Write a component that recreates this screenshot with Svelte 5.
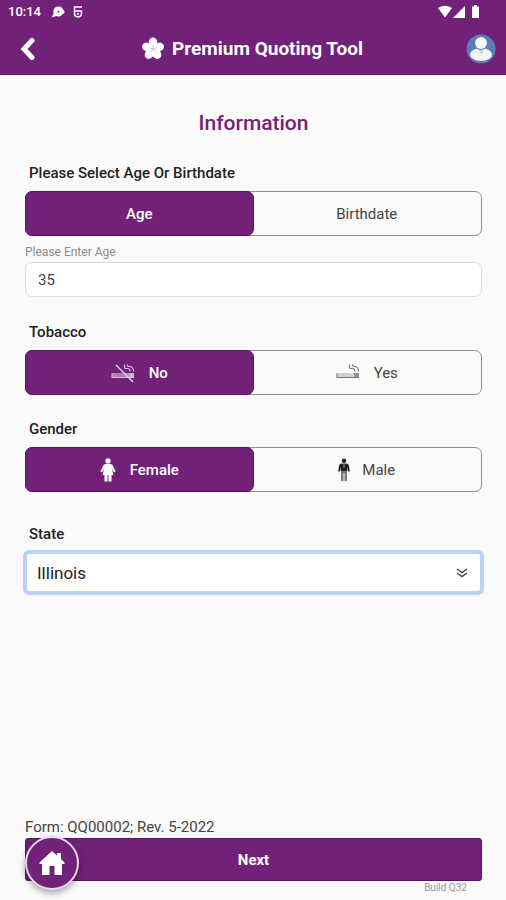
<script lang="ts">
  type Mode = "age" | "birthdate";

  const states = ["Illinois", "Indiana", "Iowa", "Michigan", "Wisconsin"];

  let mode = $state<Mode>("age");
  let age = $state("35");
  let tobacco = $state("no");
  let gender = $state("female");
  let region = $state("Illinois");
</script>

{#snippet cigarette(crossed: boolean)}
  <svg class="cig" class:crossed viewBox="0 0 24 22" aria-hidden="true">
    <rect x="1" y="11" width="22" height="5" rx="1" fill="currentColor" opacity="0.3" />
    <path
      d="M1 11V16M1 15.500H23"
      fill="none"
      stroke="currentColor"
      stroke-width="1"
    />
    <rect x="18" y="11" width="5" height="5" fill="currentColor" opacity="0.7" />
    <path
      d="M13.5 2.5V5.5Q13.5 6.5 15 6.5H16.5Q19 6.5 19 9.5M16.5 2.5V3.5Q16.5 4.5 18.5 4.5Q22.5 4.5 22.5 9.5"
      fill="none"
      stroke="currentColor"
      stroke-width="1.2"
    />
    {#if crossed}
      <rect x="1" y="11" width="22" height="5" rx="1" fill="currentColor" opacity="0.4" />
      <path d="M5 3L22 20" stroke="currentColor" stroke-width="1.6" />
    {/if}
  </svg>
{/snippet}

<div class="screen">
  <header>
    <div class="status">
      <span class="time">10:14</span>
      <svg class="glyph" viewBox="0 0 14 12" aria-hidden="true">
        <path
          d="M7.500 0.500A4.800 4.800 0 0 1 12 3.500Q14 4.500 13.500 6.500Q13 8 11.500 8A4.800 4.800 0 0 1 5.500 10L0.500 11.500L2.800 7.500A4.900 4.900 0 0 1 7.500 0.500Z"
          fill="currentColor"
        />
        <circle cx="7.500" cy="5.500" r="1" fill="#712177" />
      </svg>
      <svg class="glyph five" viewBox="0 0 10 12" aria-hidden="true">
        <path
          d="M9 1H1.500V5H8.500V8Q8.500 10.500 5 11Q1.500 10.500 1.500 8V5M4 8H6"
          fill="none"
          stroke="currentColor"
          stroke-width="1.4"
        />
      </svg>
      <svg class="signals" viewBox="0 0 44 14" aria-hidden="true">
        <path d="M0 3Q7 -1.500 14 3L7 12.500Z" fill="currentColor" />
        <path d="M15 13L27 1V13Z" fill="currentColor" />
        <path
          d="M36 0H39V1.500H41V13H34V1.500H36Z"
          fill="currentColor"
        />
      </svg>
    </div>
    <div class="bar">
      <button class="icon-btn" type="button" aria-label="Back">
        <svg class="back" viewBox="0 0 16 24" aria-hidden="true">
          <path
            d="M12 3.500L4 12L12 20.500"
            fill="none"
            stroke="currentColor"
            stroke-width="5"
            stroke-linecap="round"
          />
        </svg>
      </button>
      <h1>
        <svg class="flower" viewBox="-12 -12 24 24" aria-hidden="true">
          {#each [0, 72, 144, 216, 288] as angle}
            <g transform="rotate({angle})">
              <ellipse cx="0" cy="-6.500" rx="4.300" ry="4.900" fill="currentColor" />
            </g>
          {/each}
          <circle r="3.500" fill="currentColor" />
          <path
            d="M0 0V-4M0 0L3.800 -1.200M0 0L2.400 3.200M0 0L-2.400 3.200M0 0L-3.800 -1.200"
            stroke="#c9a9cc"
            stroke-width="0.7"
          />
        </svg>
        Premium Quoting Tool
      </h1>
      <button class="icon-btn" type="button" aria-label="Profile">
        <svg class="avatar" viewBox="0 0 30 30" aria-hidden="true">
          <circle cx="15" cy="15" r="14.500" fill="#5d7db6" />
          <ellipse cx="15" cy="20.500" rx="11" ry="6.500" fill="#f3f5f8" />
          <circle cx="15" cy="9" r="7" fill="#5d7db6" />
          <circle cx="15" cy="9" r="6" fill="#f3f5f8" />
          <path d="M12.500 16H17.500L15 21Z" fill="#d3d8dc" />
        </svg>
      </button>
    </div>
  </header>

  <main>
    <h2>Information</h2>

    <fieldset class="first">
      <legend>Please Select Age Or Birthdate</legend>
      <div class="segments">
        <label>
          <input type="radio" name="mode" value="age" bind:group={mode} />
          Age
        </label>
        <label>
          <input type="radio" name="mode" value="birthdate" bind:group={mode} />
          Birthdate
        </label>
      </div>
    </fieldset>

    <div class="field">
      <label class="hint" for="age">Please Enter Age</label>
      <input class="text" id="age" type="text" inputmode="numeric" bind:value={age} />
    </div>

    <fieldset class="group">
      <legend>Tobacco</legend>
      <div class="segments">
        <label>
          <input type="radio" name="tobacco" value="no" bind:group={tobacco} />
          {@render cigarette(true)}
          No
        </label>
        <label>
          <input type="radio" name="tobacco" value="yes" bind:group={tobacco} />
          {@render cigarette(false)}
          Yes
        </label>
      </div>
    </fieldset>

    <fieldset class="group">
      <legend>Gender</legend>
      <div class="segments">
        <label>
          <input type="radio" name="gender" value="female" bind:group={gender} />
          <svg class="person" viewBox="0 0 16 24" aria-hidden="true">
            <circle cx="8" cy="3" r="2.700" fill="currentColor" />
            <path
              d="M5.500 6H10.500Q12.500 6 13.500 9L15.500 13Q15 14.500 13.800 14L12 11.500L13.500 17H11.500V23.500H8.500V17H7.500V23.500H4.500V17H2.500L4 11.500L2.200 14Q1 14.500 0.500 13L2.500 9Q3.500 6 5.500 6Z"
              fill="currentColor"
            />
          </svg>
          Female
        </label>
        <label class="male">
          <input type="radio" name="gender" value="male" bind:group={gender} />
          <svg class="person slim" viewBox="0 0 12 24" aria-hidden="true">
            <circle cx="6" cy="2.700" r="2.200" fill="#222" />
            <path
              d="M3.500 5.500H8.500Q10.500 5.500 11 8L11.800 13.500H10L9 9V14H3V9L2 13.500H0.200L1 8Q1.500 5.500 3.500 5.500Z"
              fill="#222"
            />
            <path d="M3 13H9V23H6.500V15H5.500V23H3Z" fill="#777" />
            <path d="M5.500 15H6.500V23H5.500Z" fill="#bbb" />
            <path d="M6 6V10" stroke="#999" stroke-width="1" />
          </svg>
          Male
        </label>
      </div>
    </fieldset>

    <div class="state">
      <label class="caption" for="state">State</label>
      <div class="select">
        <select id="state" bind:value={region}>
          {#each states as name}
            <option>{name}</option>
          {/each}
        </select>
        <svg class="chevrons" viewBox="0 0 12 10" aria-hidden="true">
          <path
            d="M1 1L6 4.500L11 1M1 5L6 8.500L11 5"
            fill="none"
            stroke="currentColor"
            stroke-width="1.5"
          />
        </svg>
      </div>
    </div>
  </main>

  <footer>
    <p class="form-id">Form: QQ00002; Rev. 5-2022</p>
    <div class="next-row">
      <button class="next" type="button">Next</button>
      <button class="home" type="button" aria-label="Home">
        <svg viewBox="0 0 26 26" aria-hidden="true">
          <path
            d="M13 1L18 5.500V3H22V9L25.500 12.500V14H23V25H15.500V16H10.500V25H3V14H0.500V12.500Z"
            fill="currentColor"
          />
        </svg>
      </button>
    </div>
    <p class="build">Build Q32</p>
  </footer>
</div>

<style>
  :global(body) {
    background: #fafafa;
  }
  .screen {
    --purple: #712177;
    --purple-edge: #5c0f68;
    display: flex;
    flex-direction: column;
    min-height: 100vh;
    background: #fafafa;
    color: #222;
    font-family: Roboto, "Liberation Sans", sans-serif;
    font-size: 15px;
    line-height: 16px;
  }
  .screen *,
  .screen {
    box-sizing: border-box;
  }
  h1,
  h2,
  p,
  fieldset,
  legend {
    margin: 0;
    padding: 0;
    border: 0;
  }
  button,
  input,
  select {
    font: inherit;
    color: inherit;
  }
  svg {
    display: block;
    flex: none;
  }

  header {
    background: var(--purple);
    border-bottom: 1px solid var(--purple-edge);
    color: #fff;
  }
  .status {
    display: flex;
    align-items: center;
    height: 24px;
    padding: 0 24px 0 8px;
  }
  .time {
    margin-right: 10px;
    font-size: 13px;
    font-weight: 500;
  }
  .glyph {
    width: 14px;
    height: 12px;
  }
  .five {
    width: 10px;
    margin-left: 8px;
  }
  .signals {
    width: 44px;
    height: 14px;
    margin-left: auto;
  }
  .bar {
    display: flex;
    align-items: center;
    justify-content: space-between;
    height: 50px;
    padding: 0 10px 0 20px;
  }
  .icon-btn {
    display: flex;
    padding: 0;
    border: 0;
    background: none;
    cursor: pointer;
  }
  .back {
    width: 16px;
    height: 24px;
  }
  .avatar {
    width: 30px;
    height: 30px;
  }
  h1 {
    display: flex;
    align-items: center;
    gap: 7px;
    padding-left: 2px;
    font-size: 19px;
    font-weight: 700;
    line-height: 24px;
  }
  .flower {
    width: 24px;
    height: 24px;
  }

  main {
    flex: 1;
    padding: 34px 24px 24px 25px;
  }
  h2 {
    color: var(--purple);
    font-size: 21px;
    font-weight: 500;
    line-height: 28px;
    text-align: center;
  }
  fieldset {
    min-width: 0;
  }
  legend,
  .caption {
    display: block;
    padding: 0 4px 10px;
    font-weight: 500;
  }
  .first {
    margin-top: 28px;
  }
  .group {
    margin-top: 27px;
  }
  .group + .group {
    margin-top: 26px;
  }
  .state {
    margin-top: 34px;
  }
  .state .caption {
    padding-bottom: 8px;
  }
  .segments {
    display: grid;
    grid-template-columns: 1fr 1fr;
    height: 45px;
    border: 1px solid #918ca0;
    border-radius: 7px;
  }
  .segments label {
    display: flex;
    align-items: center;
    justify-content: center;
    gap: 14px;
    margin: -1px 0 -1px -1px;
    border-radius: 7px;
    color: #444;
    cursor: pointer;
  }
  .segments .male {
    gap: 12px;
  }
  .segments label:has(input:checked) {
    border: 1px solid var(--purple-edge);
    background: var(--purple);
    color: #fff;
    font-weight: 500;
  }
  .segments label:has(input:focus-visible) {
    outline: 2px solid #b3d1fa;
  }
  /* Off screen but still focusable; the label is what shows. */
  .segments input {
    position: absolute;
    width: 1px;
    height: 1px;
    margin: 0;
    opacity: 0;
  }
  .cig {
    width: 24px;
    height: 22px;
    color: #777;
  }
  .crossed {
    color: #dcc6de;
  }
  .person {
    width: 16px;
    height: 24px;
  }
  .slim {
    width: 12px;
  }

  .field {
    margin-top: 9px;
  }
  .hint {
    display: block;
    padding-bottom: 2px;
    color: #8c8c8c;
    font-size: 12px;
    line-height: 15px;
  }
  .text {
    display: block;
    width: 100%;
    height: 35px;
    padding: 0 12px;
    border: 1px solid #dcdcdc;
    border-radius: 7px;
    background: #fff;
    color: #444;
  }

  .select {
    display: grid;
    align-items: center;
    margin: 0 -2px;
    border: 4px solid #b8d2f9;
    border-radius: 6px;
    background: #fff;
  }
  select {
    grid-area: 1 / 1;
    width: 100%;
    height: 37px;
    padding: 0 10px;
    border: 0;
    outline: 0;
    background: none;
    appearance: none;
    font-size: 17px;
  }
  .chevrons {
    grid-area: 1 / 1;
    justify-self: end;
    width: 12px;
    height: 10px;
    margin-right: 12px;
    color: #444;
    pointer-events: none;
  }

  footer {
    padding: 0 24px 5px 25px;
  }
  .form-id {
    padding-bottom: 3px;
    color: #444;
  }
  .next-row {
    position: relative;
  }
  .next {
    display: block;
    width: 100%;
    height: 43px;
    border: 1px solid var(--purple-edge);
    border-radius: 3px;
    background: var(--purple);
    color: #fff;
    font-weight: 700;
    cursor: pointer;
  }
  /* Floats over the left end of the Next button. */
  .home {
    position: absolute;
    top: -2px;
    left: 0;
    display: grid;
    place-items: center;
    width: 54px;
    height: 54px;
    padding: 0;
    border: 2px solid #ead9ec;
    border-radius: 50%;
    background: var(--purple);
    box-shadow: 0 3px 6px rgb(0 0 0 / 0.35);
    color: #fff;
    cursor: pointer;
  }
  .home svg {
    width: 26px;
    height: 26px;
  }
  .build {
    padding-right: 15px;
    color: #999;
    font-size: 10px;
    line-height: 14px;
    text-align: right;
  }
</style>
